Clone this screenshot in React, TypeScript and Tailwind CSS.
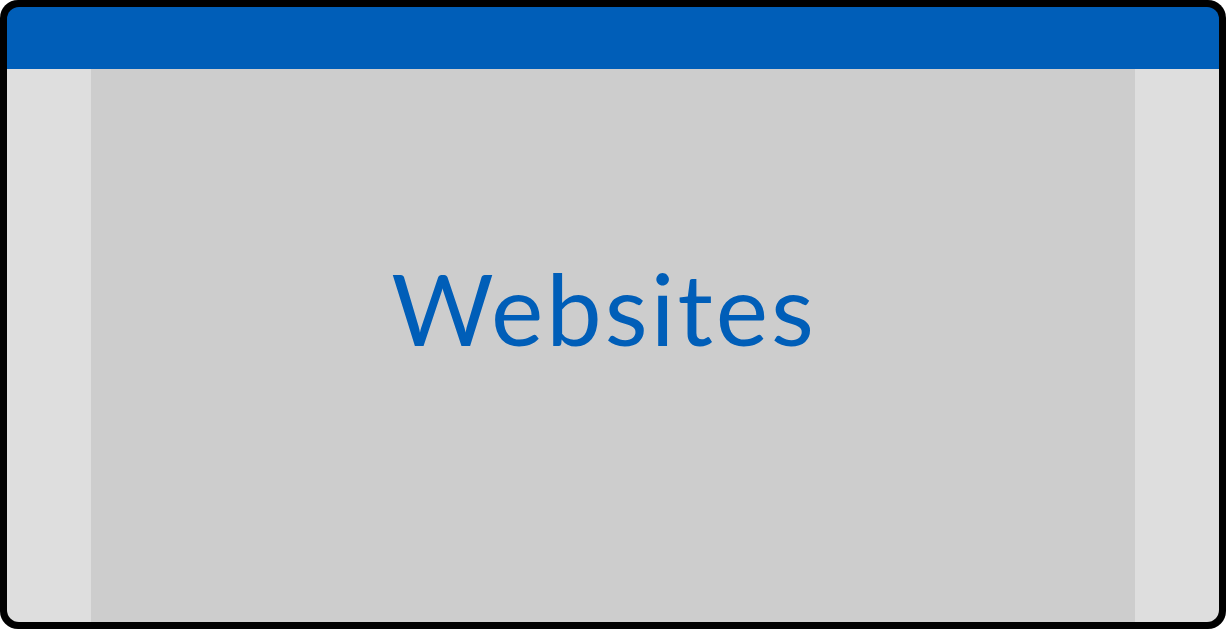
export default function App() {
  return (
    <div className="w-[1226px] h-[629px] bg-white">
      <div className="h-full rounded-[18px] bg-black p-[7px]">
        <div className="h-full rounded-[12px] overflow-hidden flex flex-col">
          <div className="h-[62px] bg-[#005EB8]" />
          <div className="flex-1 flex">
            <div className="w-[84px] bg-[#DEDEDE]" />
            <div className="flex-1 bg-[#CDCDCD] flex justify-center pt-[189px]">
              <h1 className="text-[99px] leading-none text-[#005EB8] font-normal tracking-[3px] pr-[18px]" style={{ fontFamily: 'Lato, "Noto Sans", sans-serif' }}>
                Websites
              </h1>
            </div>
            <div className="w-[84px] bg-[#DEDEDE]" />
          </div>
        </div>
      </div>
    </div>
  );
}
